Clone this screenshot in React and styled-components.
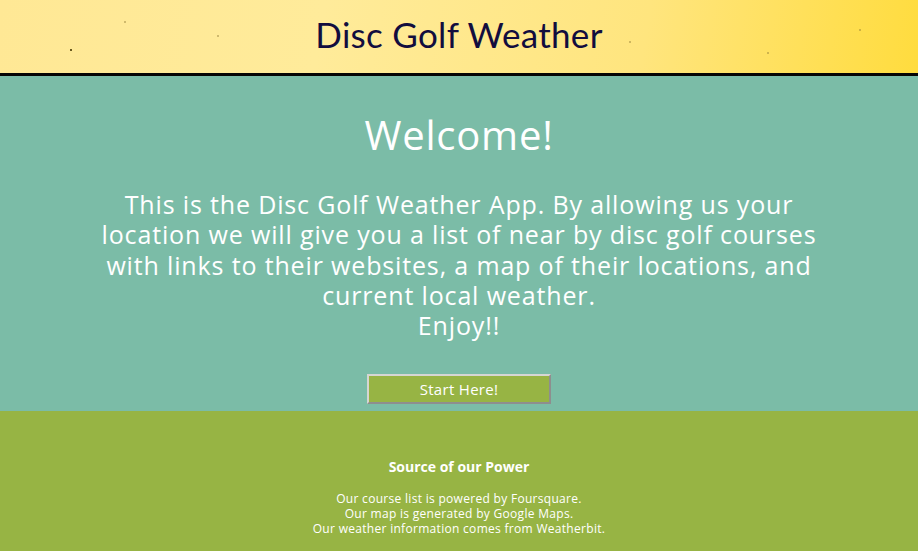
import React from 'react'
import styled, { createGlobalStyle } from 'styled-components'

const GlobalStyle = createGlobalStyle`
  html, body {
    margin: 0;
    padding: 0;
    background: #97b444;
  }
  body {
    font-family: "Open Sans", "Noto Sans", sans-serif;
  }
`

const Page = styled.div`
  display: flex;
  flex-direction: column;
  width: 100%;
  min-height: 551px;
`

const Header = styled.header`
  display: flex;
  justify-content: center;
  align-items: center;
  height: 76px;
  padding-bottom: 6px;
  box-sizing: border-box;
  border-bottom: 3px solid #050505;
  background:
    radial-gradient(circle at 71px 50px, #6b5a20 0, #6b5a20 1px, transparent 1.5px),
    radial-gradient(circle at 125px 22px, #8a7430 0, transparent 1.2px),
    radial-gradient(circle at 218px 36px, #8a7430 0, transparent 1.2px),
    radial-gradient(circle at 630px 42px, #8a7430 0, transparent 1.2px),
    radial-gradient(circle at 768px 53px, #8a7430 0, transparent 1.2px),
    radial-gradient(circle at 860px 30px, #8a7430 0, transparent 1.2px),
    linear-gradient(100deg, #ffe895 0%, #ffeb9a 35%, #ffe57e 70%, #ffdc3e 100%);
`

const Title = styled.h1`
  margin: 0;
  font-family: Lato, "Open Sans", sans-serif;
  font-weight: 400;
  font-size: 35px;
  letter-spacing: 0.3px;
  color: #120d3e;
`

const Main = styled.section`
  display: flex;
  flex-direction: column;
  align-items: center;
  background: #7bbca7;
  padding: 36px 0 7px;
  color: #ffffff;
`

const Heading = styled.h2`
  margin: 0;
  font-size: 40px;
  font-weight: 500;
  letter-spacing: 0.8px;
  line-height: 46px;
`

const Intro = styled.p`
  margin: 31px 0 0;
  max-width: 730px;
  font-size: 25px;
  letter-spacing: 0.85px;
  line-height: 30.3px;
  text-align: center;
`

const StartButton = styled.button`
  margin-top: 34px;
  width: 184px;
  height: 30px;
  background: #97b444;
  color: #ffffff;
  font-family: "Open Sans", sans-serif;
  font-size: 15px;
  letter-spacing: 0.3px;
  border: 2px solid;
  border-color: #d6d6d2 #8e8e8e #8e8e8e #d6d6d2;
  cursor: pointer;
`

const Footer = styled.footer`
  display: flex;
  flex-direction: column;
  align-items: center;
  flex: 1;
  background: #97b444;
  color: #ffffff;
  padding: 47px 0 14px;
  text-align: center;
`

const FooterTitle = styled.h3`
  margin: 0;
  font-size: 14px;
  font-weight: 700;
  line-height: 18px;
`

const Credits = styled.p`
  margin: 15px 0 0;
  font-size: 12px;
  letter-spacing: 0.3px;
  line-height: 15px;
`

const App = () => {
  return (
    <Page>
      <GlobalStyle />
      <Header>
        <Title>Disc Golf Weather</Title>
      </Header>
      <Main>
        <Heading>Welcome!</Heading>
        <Intro>
          This is the Disc Golf Weather App. By allowing us your location we will give you a
          list of near by disc golf courses with links to their websites, a map of their
          locations, and current local weather.
          <br />
          Enjoy!!
        </Intro>
        <StartButton>Start Here!</StartButton>
      </Main>
      <Footer>
        <FooterTitle>Source of our Power</FooterTitle>
        <Credits>
          Our course list is powered by Foursquare.
          <br />
          Our map is generated by Google Maps.
          <br />
          Our weather information comes from Weatherbit.
        </Credits>
      </Footer>
    </Page>
  )
}

export default App
